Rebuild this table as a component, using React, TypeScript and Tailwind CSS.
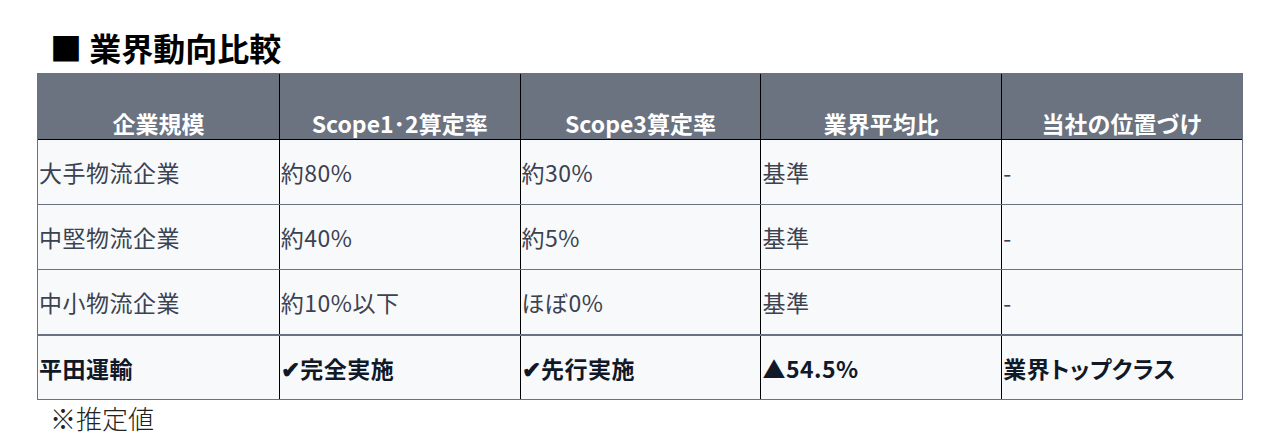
const font = { fontFamily: '"Noto Sans CJK JP", "Noto Sans", sans-serif' };

const headers = ['企業規模', 'Scope1･2算定率', 'Scope3算定率', '業界平均比', '当社の位置づけ'];

const rows = [
  ['大手物流企業', '約80%', '約30%', '基準', '-'],
  ['中堅物流企業', '約40%', '約5%', '基準', '-'],
  ['中小物流企業', '約10%以下', 'ほぼ0%', '基準', '-'],
];

const ours = ['平田運輸', '✔完全実施', '✔先行実施', '▲54.5%', '業界トップクラス'];

export default function App() {
  return (
    <div className="h-[439px] w-[1280px] bg-white" style={font}>
      <h1 className="pl-[50px] pt-[24px] text-[32px] font-bold leading-[46px] text-black">■ 業界動向比較</h1>

      <div className="ml-[37px] mt-[3px] w-[1206px] border border-gray-500">
        <div className="grid h-[65px] grid-cols-5 bg-[#6b7280]">
          {headers.map((h, i) => (
            <div
              key={h}
              className={`flex items-end justify-center pb-[1px] text-[23px] font-bold leading-[30px] text-white ${i > 0 ? 'border-l border-black' : ''}`}
            >
              {h}
            </div>
          ))}
        </div>

        {rows.map((r, ri) => (
          <div
            key={r[0]}
            className={`grid h-[65px] grid-cols-5 bg-[#f8f9fb] border-t ${ri === 0 ? 'border-black' : 'border-gray-500'}`}
          >
            {r.map((c, i) => (
              <div
                key={i}
                className={`flex items-center pl-[1px] text-[23px] leading-[30px] tracking-[0.5px] text-[#3b4250] ${i > 0 ? 'border-l border-black' : ''}`}
              >
                {c}
              </div>
            ))}
          </div>
        ))}

        <div className="grid h-[65px] grid-cols-5 border-t-2 border-gray-500 bg-[#f8f9fb]">
          {ours.map((c, i) => (
            <div
              key={i}
              className={`flex items-center pl-[1px] text-[23px] font-bold leading-[30px] tracking-[0.5px] text-[#111827] ${i > 0 ? 'border-l border-black' : ''} ${i === 4 ? "[font-feature-settings:'palt']" : ''}`}
            >
              {c}
            </div>
          ))}
        </div>
      </div>

      <p className="pl-[50px] pt-[1px] text-[26px] font-light leading-[34px] text-[#222]">※推定値</p>
    </div>
  );
}
